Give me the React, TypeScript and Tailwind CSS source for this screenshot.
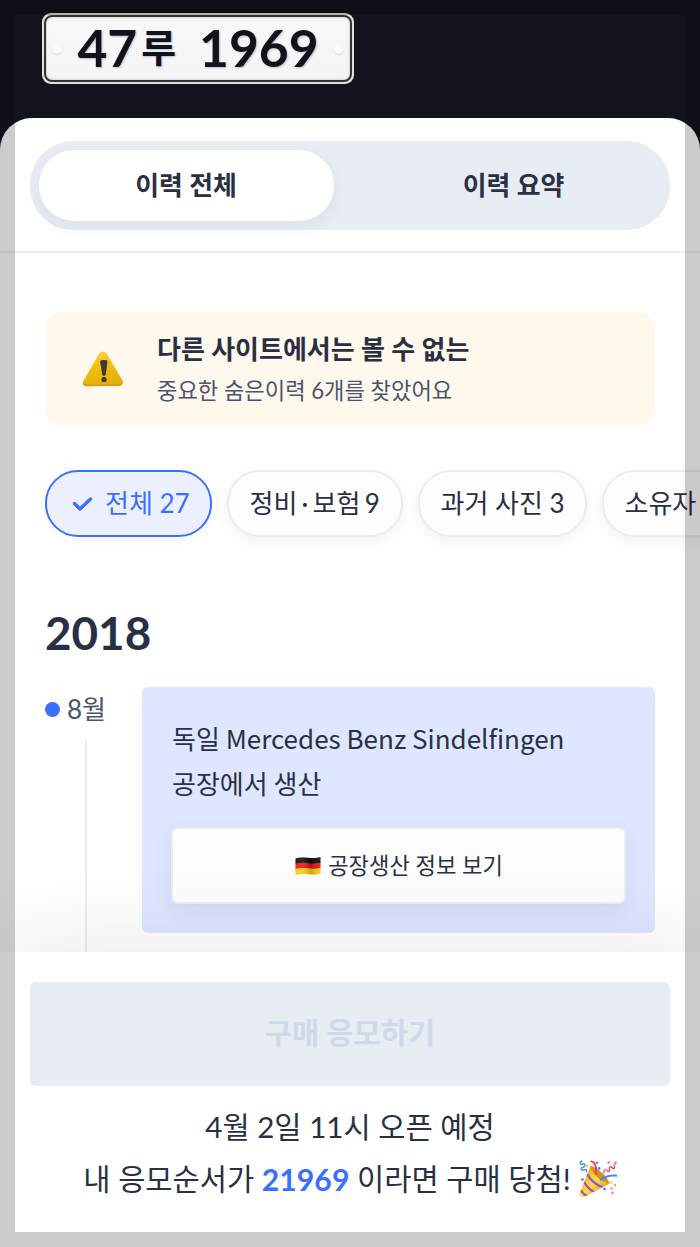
import React from "react";

const filters = [
  { id: "repair", label: "정비 · 보험 9", width: "w-[176px] [word-spacing:-2.4px]" },
  { id: "photo", label: "과거 사진 3", width: "w-[169px]" },
  { id: "owner", label: "소유자", width: "w-[160px]" },
];

function WarningIcon() {
  return (
    <svg width="42" height="36" viewBox="0 0 42 36" fill="none">
      <defs>
        <linearGradient id="warn" x1="0" y1="0" x2="0.3" y2="1">
          <stop offset="0" stopColor="#fbd84a" />
          <stop offset="0.5" stopColor="#f0c010" />
          <stop offset="1" stopColor="#e3b008" />
        </linearGradient>
      </defs>
      <path
        d="M17.2 2.6C19 .2 22.8.2 24.6 2.6L40 28.6c1.8 3.2.4 6-3.2 6.1l-32 .6C1.300 35.300-.200 32.500 1.700 29.300Z"
        fill="url(#warn)"
      />
      <path
        d="M1.500 29.700C0 32.500 1.500 35.300 4.800 35.300l32-.6c3 0 4.500-2 3.900-4.500-.6 2-2 2.900-4 2.900l-31 .6c-3 0-4.300-1.500-4.200-4Z"
        fill="#d79a12"
      />
      <path
        d="M18.200 11.200c-.1-1.600.8-2.300 2.400-2.300h2.500c1.600 0 2.500.8 2.300 2.400l-1.600 12.200c-.3 1.900-3.300 1.900-3.600 0Z"
        fill="#3f3a38"
      />
      <circle cx="22" cy="28.500" r="2.600" fill="#3f3a38" />
    </svg>
  );
}

function GermanFlag() {
  return (
    <svg width="26" height="20" viewBox="0 0 26 20" fill="none">
      <defs>
        <linearGradient id="wave" x1="0" y1="0" x2="1" y2="0">
          <stop offset="0" stopColor="#fff" stopOpacity="0.1" />
          <stop offset="0.3" stopColor="#fff" stopOpacity="0.12" />
          <stop offset="0.600" stopColor="#000" stopOpacity="0.18" />
          <stop offset="1" stopColor="#fff" stopOpacity="0.1" />
        </linearGradient>
      </defs>
      <path d="M.5 2.500C9-.500 16 4 25.500 1v6C16 10 9 5.500.5 8.500Z" fill="#0b0909" />
      <path d="M.5 7.800C9 4.800 16 9.500 25.500 6.500v6c-9 3-16-1.500-25 1.500Z" fill="#e8110f" />
      <path d="M.5 13.200c8-3 15 1.500 25-1.500v6c-9 3-16-1.500-25 1.500Z" fill="#f8c90e" />
      <path d="M.5 2.500C9-.500 16 4 25.500 1v16.700c-9 3-16-1.500-25 1.500Z" fill="url(#wave)" />
    </svg>
  );
}

function PartyIcon() {
  return (
    <svg width="38" height="38" viewBox="0 0 38 38" fill="none">
      <defs>
        <linearGradient id="cone" x1="0" y1="0.3" x2="0.700" y2="1">
          <stop offset="0" stopColor="#e7a91d" />
          <stop offset="0.5" stopColor="#fbdc4b" />
          <stop offset="1" stopColor="#d99a1c" />
        </linearGradient>
        <clipPath id="coneClip">
          <path d="M11.500 6C17 7 28 16 30.500 23.500L6 36.500C3 38 0 36 .8 33Z" />
        </clipPath>
      </defs>
      <path d="M11.500 6C17 7 28 16 30.500 23.500L6 36.500C3 38 0 36 .8 33Z" fill="url(#cone)" />
      <g clipPath="url(#coneClip)" stroke="#a04cc4" strokeWidth="2.200">
        <path d="M8 14c4 7 9 11 16 13.500" />
        <path d="M5 22c3 5 7 9 12 11" />
        <path d="M2 30c1 3 4 5 7 6.500" />
      </g>
      <path d="M11.500 6C18 7 29 17 30.500 23.500 22 22 12 13 11.500 6Z" fill="#d6921c" />
      <path d="M17 14C17.500 7 16.500 2 12.500 1.500" stroke="#ef3f65" strokeWidth="2.200" strokeLinecap="round" />
      <path d="M22 19.500C27 16 32 15 37.500 15.700" stroke="#4a8af0" strokeWidth="2.200" strokeLinecap="round" />
      <path
        d="M3.500 1C-.500 2 1 5 4 4s2 3-.5 3.500S2 11 5 10s3 .5 2 2.500"
        stroke="#4a8af0"
        strokeWidth="1.400"
      />
      <path
        d="M25 13.500c-1-4 2-5 3-3s3 1 2.500-1.500 2-3 3-1 2.500 0 2-2 .5-3 2-3"
        stroke="#ef3f65"
        strokeWidth="1.400"
      />
      <path d="M25 13.500c-1-4 2-5 3-3M35.500 6c-.5-2 .5-4 2-5" stroke="#f38bbd" strokeWidth="1.400" />
      <circle cx="18" cy="2.800" r="1.300" fill="#4a8af0" />
      <circle cx="20" cy="8.500" r="1.400" fill="#4a8af0" />
      <circle cx="8" cy="6" r="1.400" fill="#f7d038" />
      <circle cx="29.500" cy="2.500" r="1.100" fill="#ef3f65" />
      <circle cx="3.500" cy="19.500" r="1.300" fill="#ef3f65" />
      <circle cx="32" cy="22.500" r="1.300" fill="#f7d038" />
      <circle cx="36" cy="25" r="1.300" fill="#f0a63c" />
      <circle cx="25.500" cy="29" r="1.400" fill="#4a8af0" />
      <circle cx="32.500" cy="28.500" r="1.300" fill="#f0a63c" />
      <circle cx="33.500" cy="33" r="1.400" fill="#f38bbd" />
    </svg>
  );
}

function Plate() {
  return (
    <div className="mt-[13px] ml-[42px] h-[71px] w-[312px] rounded-[9px] bg-[#dfe2e1] p-[2px]">
      <div className="flex h-full items-center justify-between rounded-[8px] border-2 border-[#30332f] bg-linear-to-b from-[#f7f8f8] to-[#f4f5f7] px-[6px] shadow-[inset_0_0_3px_rgba(0,0,0,0.25)]">
        <span className="size-[10px] rounded-full bg-[#fafafa] shadow-[0_1px_2px_rgba(0,0,0,0.12)]" />
        <div className="flex items-center pb-[3px] text-[51.5px] leading-[60px] font-bold text-[#10131a] [text-shadow:1px_1px_2px_rgba(20,25,60,0.25)]">
          <span>47</span>
          <span className="ml-[4px] text-[38px]">루</span>
          <span className="ml-[23px]">1969</span>
        </div>
        <span className="size-[10px] rounded-full bg-[#fafafa] shadow-[0_1px_2px_rgba(0,0,0,0.12)]" />
      </div>
    </div>
  );
}

export default function App() {
  return (
    <div className="relative flex h-[1247px] w-[700px] flex-col overflow-hidden bg-[#11141c] font-[Lato,'Noto_Sans_CJK_KR',sans-serif] text-[#2a3043]">
      <header className="flex h-[118px] shrink-0 items-start">
        <Plate />
      </header>

      <main className="flex min-h-0 flex-1 flex-col overflow-hidden rounded-t-[32px] bg-white">
        <nav className="h-[135px] shrink-0 border-b-2 border-[#eceff5] px-[30px] pt-[23px]">
          <div className="flex h-[89px] rounded-[43px] bg-[#e8edf4] p-[9px] text-[25.9px] font-bold">
            <button className="h-[71px] w-[295px] rounded-[35px] bg-white pr-px shadow-[0_6px_18px_rgba(30,40,80,0.06)]">
              이력 전체
            </button>
            <button className="h-[71px] flex-1 pl-[32px]">이력 요약</button>
          </div>
        </nav>

        <section className="min-h-0 flex-1 overflow-hidden pt-[59px] pl-[45px]">
          <div className="flex h-[113px] w-[610px] items-center rounded-[16px] bg-[#fff8ec] pl-[37px]">
            <WarningIcon />
            <div className="ml-[33px] pt-[2px]">
              <p className="text-[26px] leading-[42px] font-bold">
                다른 사이트에서는 볼 수 없는
              </p>
              <p className="text-[22.2px] leading-[41px] text-[#4a5470]">
                중요한 숨은이력 6개를 찾았어요
              </p>
            </div>
          </div>

          <div className="mt-[45px] flex gap-[15px] text-[26px]">
            <button className="flex h-[67px] w-[167px] shrink-0 items-center rounded-[33px] border-2 border-[#3b70ff] bg-[#ecf0fe] pl-[25px] text-[#3b70ff] shadow-[0_4px_14px_rgba(0,0,0,0.03)]">
              <svg width="21" height="16" viewBox="0 0 21 16" fill="none">
                <path
                  d="M2.500 7.500 8 13 18.500 3"
                  stroke="#3b70ff"
                  strokeWidth="3.400"
                  strokeLinecap="round"
                  strokeLinejoin="round"
                />
              </svg>
              <span className="ml-[12px] whitespace-nowrap">전체 27</span>
            </button>
            {filters.map((filter) => (
              <button
                key={filter.id}
                className={`h-[67px] shrink-0 rounded-[33px] border-2 border-[#e9edf6] bg-[#fdfdfe] pl-[20.500px] text-left whitespace-nowrap shadow-[0_4px_14px_rgba(0,0,0,0.06)] ${filter.width}`}
              >
                {filter.label}
              </button>
            ))}
          </div>

          <h2 className="mt-[66px] text-[45.8px] leading-[60px] font-bold">2018</h2>

          <div className="mt-[24px] flex">
            <div className="w-[97px]">
              <div className="flex h-[44px] items-center text-[26px] text-[#4a5470]">
                <span className="mr-[7px] size-[15px] rounded-full bg-[#3b70ff]" />
                8월
              </div>
              <div className="mt-[8px] ml-[40px] h-[300px] w-[2px] bg-[#e8edf5]" />
            </div>
            <div className="h-[246px] w-[513px] rounded-[6px] bg-[#dfe6ff] px-[30px] pt-[28px]">
              <p className="font-['Noto_Sans_CJK_KR',sans-serif] text-[26px] leading-[45px]">
                독일 Mercedes Benz Sindelfingen
                <br />
                공장에서 생산
              </p>
              <button className="mt-[22px] -ml-px flex h-[77px] w-[455px] items-center justify-center gap-[7px] rounded-[7px] border-2 border-[#eaeef3] bg-[#fdfdfe] pl-px text-[22.2px] shadow-[0_6px_20px_rgba(30,50,100,0.08)]">
                <GermanFlag />
                공장생산 정보 보기
              </button>
            </div>
          </div>
        </section>

        <footer className="relative h-[295px] shrink-0 bg-white px-[30px] pt-[30px] text-center text-[29.6px] shadow-[0_0_90px_rgba(0,0,0,0.1)]">
          <button className="h-[104px] w-full rounded-[6px] bg-[#e8edf4] pb-px font-bold text-[#cfd9e8]">
            구매 응모하기
          </button>
          <p className="mt-[15px] leading-[52px]">4월 2일 11시 오픈 예정</p>
          <p className="flex items-center justify-center leading-[52px] whitespace-pre">
            내 응모순서가 <b className="text-[30.2px] text-[#3b70ff]">21969</b> 이라면 구매 당첨!
            <span className="ml-[8px]">
              <PartyIcon />
            </span>
          </p>
        </footer>
      </main>

      {/* dim frame over the page edges */}
      <div className="pointer-events-none absolute inset-0 border-[15px] border-black/20" />
    </div>
  );
}
